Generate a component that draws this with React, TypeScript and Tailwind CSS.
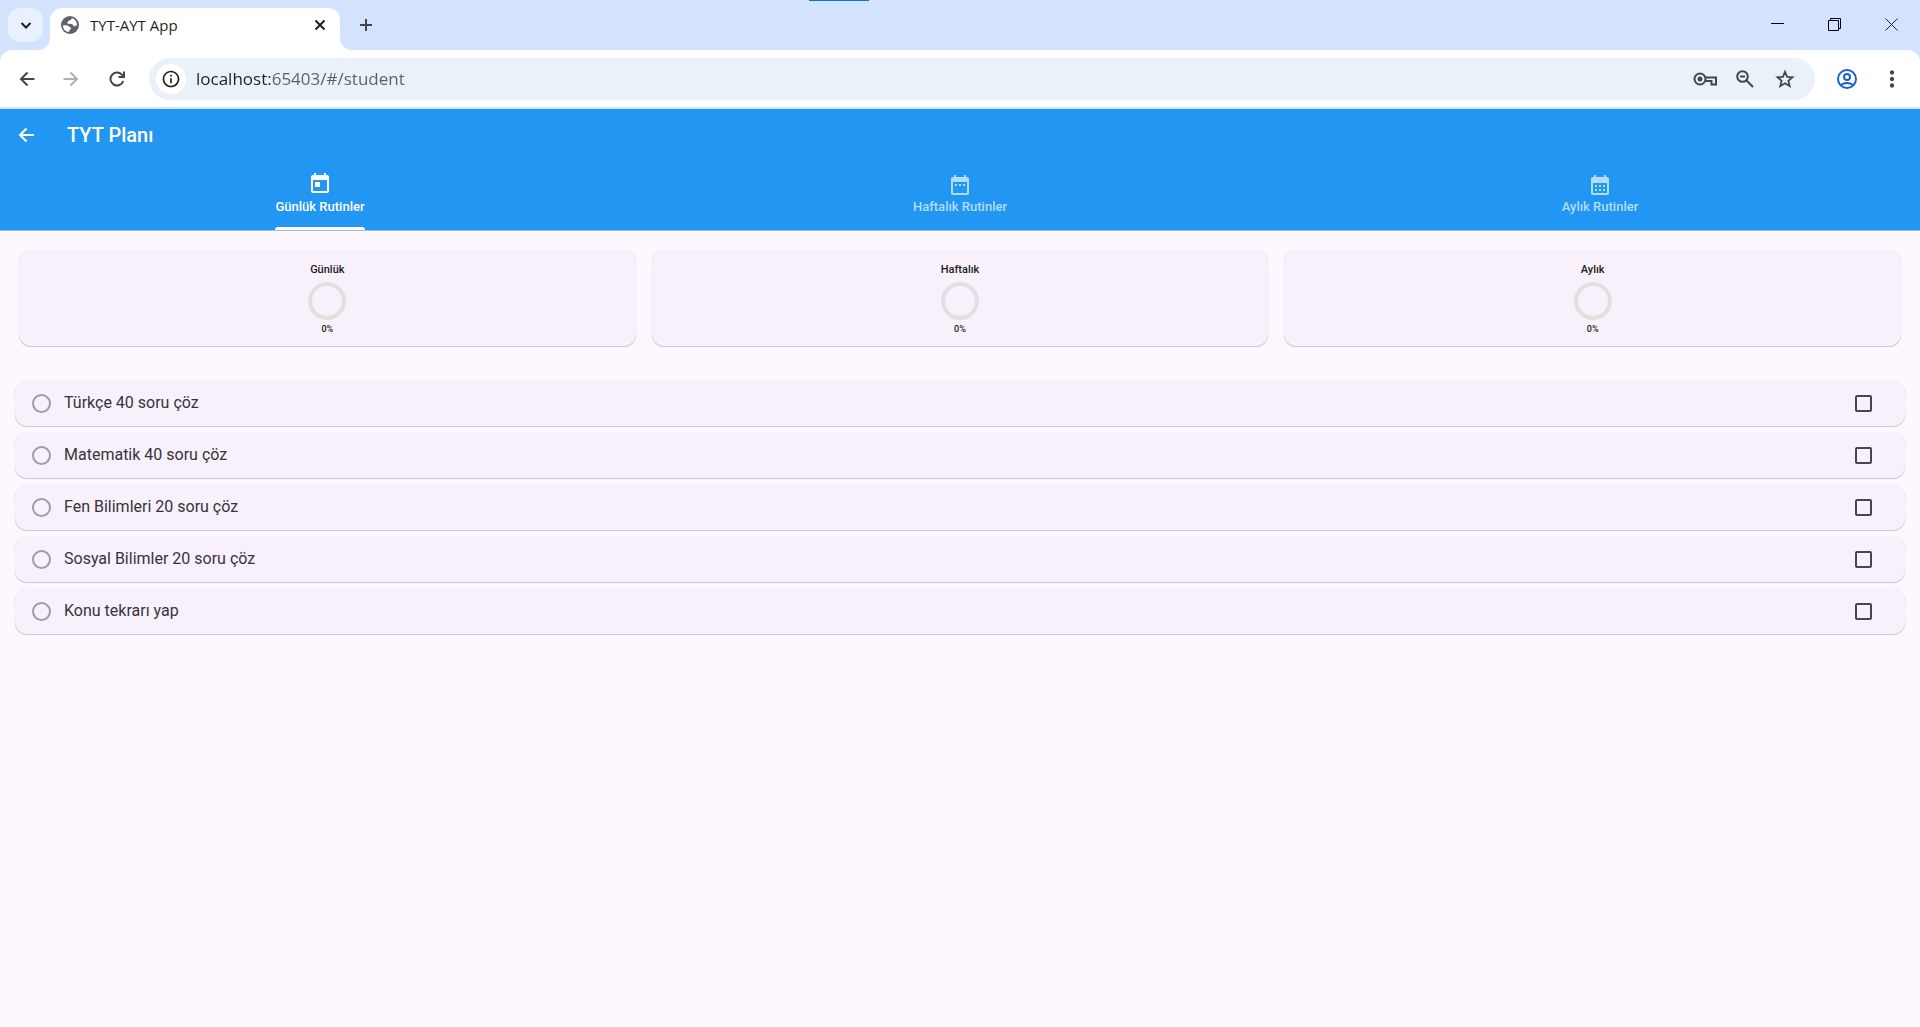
import type { ReactNode } from "react";
import { MdCalendarMonth, MdDateRange, MdInfoOutline, MdMoreVert, MdToday } from "react-icons/md";

const tabs = [
  { label: "Günlük Rutinler", icon: MdToday },
  { label: "Haftalık Rutinler", icon: MdDateRange },
  { label: "Aylık Rutinler", icon: MdCalendarMonth },
];

const summaries = [
  { label: "Günlük", percent: 0 },
  { label: "Haftalık", percent: 0 },
  { label: "Aylık", percent: 0 },
];

const routines = [
  "Türkçe 40 soru çöz",
  "Matematik 40 soru çöz",
  "Fen Bilimleri 20 soru çöz",
  "Sosyal Bilimler 20 soru çöz",
  "Konu tekrarı yap",
];

function Stroke({ d, size, width, className = "" }: { d: string; size: number; width: number; className?: string }) {
  return (
    <svg width={size} height={size} viewBox={`0 0 ${size} ${size}`} fill="none" stroke="currentColor" strokeWidth={width} className={className} aria-hidden="true">
      <path d={d} />
    </svg>
  );
}

function IconButton({ label, className, children }: { label: string; className: string; children: ReactNode }) {
  return (
    <button type="button" aria-label={label} className={`flex shrink-0 items-center justify-center ${className}`}>
      {children}
    </button>
  );
}

function Globe() {
  return (
    <svg width="20" height="20" viewBox="0 0 20 20" className="mb-2" aria-hidden="true">
      <circle cx="10" cy="10" r="9" fill="#5f6368" />
      <path
        d="M11.600 3c.2 1.300-.6 2.100-1.900 2.300-1.200.2-1 1.300-2 1.700-.9.400-.6 1.700.6 1.800l3.200.2c1.100.1 1.600.8 1.800 1.700.2.900 1.300.7 1.900.2.500-.4 1.200-.4 1.800-.3A7.200 7.200 0 0 0 11.600 3Z"
        fill="#fff"
      />
      <path
        d="M2.900 10.400c1.700-.2 3.800-.1 5.100.4 1.200.5 1.500 1.500 2.500 1.800.9.300.7 1.500-.2 1.800-.9.300-1.200.9-1.100 2.700A7.200 7.200 0 0 1 2.900 10.400Z"
        fill="#fff"
      />
    </svg>
  );
}

function TabStrip() {
  return (
    <div className="relative flex h-[50px] bg-[#d3e3fd]">
      <div className="absolute left-[809px] top-0 flex h-px" aria-hidden="true">
        <span className="w-[60px] bg-[#1273ba]" />
        <span className="w-[240px] bg-[#dfe1ee]" />
      </div>
      <IconButton label="Search tabs" className="ml-2 mt-2 h-[34px] w-[35px] rounded-xl bg-[#e9f1fe] text-[#1f1f1f]">
        <Stroke size={12} width={2} d="M1.500 4 6 8.500 10.500 4" />
      </IconButton>
      <div className="relative ml-[7px] mt-2 flex w-[290px] items-center rounded-t-xl bg-white pl-[10px] pr-3">
        <svg className="absolute -left-3 bottom-0" width="12" height="12" aria-hidden="true">
          <path d="M12 0v12H0A12 12 0 0 0 12 0Z" fill="#fff" />
        </svg>
        <svg className="absolute -right-3 bottom-0" width="12" height="12" aria-hidden="true">
          <path d="M0 0v12h12A12 12 0 0 1 0 0Z" fill="#fff" />
        </svg>
        <Globe />
        <span className="mb-2 ml-[10px] flex-1 font-['Open_Sans',sans-serif] text-[15px] text-[#1f1f1f]">TYT-AYT App</span>
        <IconButton label="Close tab" className="mb-2 size-4 text-[#1f1f1f]">
          <Stroke size={12} width={2} d="M1.500 1.500 10.500 10.500M10.500 1.500 1.500 10.500" />
        </IconButton>
      </div>
      <IconButton label="New tab" className="ml-3 h-[50px] w-7 text-[#444746]">
        <Stroke size={14} width={2} d="M7 1v12M1 7h12" />
      </IconButton>
      <div className="ml-auto flex h-12 text-black">
        <IconButton label="Minimize" className="w-[57px]">
          <Stroke size={13} width={1} d="M0 5.500h13" />
        </IconButton>
        <IconButton label="Restore" className="w-[57px]">
          <Stroke size={13} width={1} d="M.5 2.500h10v10H.5ZM2.500 2.500V.5h10v10h-2" />
        </IconButton>
        <IconButton label="Close window" className="w-[57px] text-[#222]">
          <Stroke size={13} width={1} d="M.5.5l12 12M12.500.5l-12 12" />
        </IconButton>
      </div>
    </div>
  );
}

function Toolbar() {
  return (
    <div className="bg-[#d3e3fd]">
      <div className="flex h-[59px] items-center rounded-t-xl border-b-2 border-[#d3e7f5] bg-white px-[5px] text-[#444746]">
        <IconButton label="Back" className="h-9 w-11">
          <Stroke size={16} width={2} d="M8.500 1.500 2 8l6.500 6.500M2 8h13.500" />
        </IconButton>
        <IconButton label="Forward" className="h-9 w-11 text-[#b0b1b1]">
          <Stroke size={16} width={2} d="M7.500 1.500 14 8l-6.500 6.500M14 8H.5" />
        </IconButton>
        <IconButton label="Reload" className="h-9 w-12">
          <svg width="16" height="16" viewBox="0 0 16 16" fill="none" stroke="currentColor" strokeWidth="2" aria-hidden="true">
            <path d="M14.200 10A6.500 6.500 0 1 1 12.800 3.600L14.800 5.600" />
            <path d="M15 .5v5.500H9.500" />
          </svg>
        </IconButton>
        <div className="ml-2 flex h-[42px] flex-1 items-center rounded-full bg-[#ebf1f9] pl-[7px] pr-[10px]">
          <IconButton label="Site information" className="size-[30px] rounded-full bg-white text-[#1f1f1f]">
            <MdInfoOutline className="size-5" />
          </IconButton>
          <input
            type="text"
            aria-label="Address"
            defaultValue="localhost:65403/#/student"
            className="ml-[10px] min-w-0 flex-1 bg-[linear-gradient(90deg,#1f1f1f_74px,#5b5e62_74px)] bg-clip-text font-['Open_Sans',sans-serif] text-[17px] text-transparent outline-none"
          />
          <IconButton label="Saved passwords" className="w-10">
            <svg width="24" height="14" viewBox="0 0 24 14" fill="none" stroke="currentColor" strokeWidth="2" aria-hidden="true">
              <circle cx="7" cy="7" r="5.500" />
              <circle cx="7" cy="7" r="2.500" fill="currentColor" stroke="none" />
              <path d="M12 5.500h11v7h-4.500V9H12" />
            </svg>
          </IconButton>
          <IconButton label="Zoom" className="w-10">
            <svg width="18" height="18" viewBox="0 0 18 18" fill="none" stroke="currentColor" strokeWidth="2" aria-hidden="true">
              <circle cx="6.500" cy="6.500" r="5.300" />
              <path d="M10.500 10.500 17 17M4 6.500h5" />
            </svg>
          </IconButton>
          <IconButton label="Bookmark this page" className="w-10">
            <svg width="20" height="20" viewBox="0 0 20 20" fill="none" stroke="currentColor" strokeWidth="1.800" aria-hidden="true">
              <path d="M10 2.800 12.100 7.800 17.500 8.300 13.400 11.900 14.700 17.200 10 14.300 5.300 17.200 6.600 11.900 2.500 8.300 7.900 7.800Z" />
            </svg>
          </IconButton>
        </div>
        <IconButton label="Profile" className="ml-[10px] w-11 text-[#1a5fd0]">
          <svg width="22" height="22" viewBox="0 0 22 22" fill="none" stroke="currentColor" strokeWidth="2" aria-hidden="true">
            <circle cx="11" cy="11" r="9" />
            <circle cx="11" cy="9" r="3" />
            <path d="M4.500 17.300q6.500-4.400 13 0" />
          </svg>
        </IconButton>
        <IconButton label="Menu" className="w-[46px]">
          <MdMoreVert className="size-[26px]" />
        </IconButton>
      </div>
    </div>
  );
}

function AppBar() {
  return (
    <header className="border-b border-[#9dbde0] bg-[#2196f3] text-white">
      <div className="flex h-[51px] items-center pl-[18px]">
        <IconButton label="Geri" className="size-4">
          <Stroke size={16} width={2} d="M8.500 1.500 2 8l6.500 6.500M2 8h14" />
        </IconButton>
        <h1 className="ml-[33px] text-[20px] font-medium leading-7">TYT Planı</h1>
      </div>
      <div role="tablist" className="grid grid-cols-3">
        {tabs.map(({ label, icon: Icon }, i) => (
          <button
            key={label}
            type="button"
            role="tab"
            aria-selected={i === 0}
            className={`flex h-[70px] flex-col items-center text-[13px] font-medium leading-4 ${i === 0 ? "pt-3" : "pt-[13px] text-[#b5ddfb]"}`}
          >
            <Icon className="size-6 shrink-0" aria-hidden="true" />
            <span className={`flex flex-1 flex-col justify-between ${i === 0 ? "pt-[3px]" : "pt-[2px]"}`}>
              {label}
              {i === 0 && <span className="h-[3px] rounded-t-[3px] bg-white" />}
            </span>
          </button>
        ))}
      </div>
    </header>
  );
}

function ProgressRing({ percent }: { percent: number }) {
  const length = 2 * Math.PI * 17;
  return (
    <svg width="38" height="38" viewBox="0 0 38 38" fill="none" strokeWidth="4" aria-hidden="true">
      <circle cx="19" cy="19" r="17" stroke="#e0e0e0" />
      {percent > 0 && (
        <circle cx="19" cy="19" r="17" stroke="#2196f3" strokeDasharray={`${(length * percent) / 100} ${length}`} transform="rotate(-90 19 19)" />
      )}
    </svg>
  );
}

const cardStyle = "rounded-xl bg-[#f8f1fb] shadow-[0_1px_1px_rgba(0,0,0,0.2),0_0_1px_rgba(0,0,0,0.12)]";

export default function App() {
  return (
    <div className="min-h-screen bg-[#fef7ff] font-[Roboto,sans-serif] text-[#1d1b20]">
      <TabStrip />
      <Toolbar />
      <AppBar />
      <main>
        <section className="mx-[19px] mt-[19px] grid grid-cols-3 gap-4">
          {summaries.map(({ label, percent }) => (
            <div key={label} className={`flex h-24 flex-col items-center pt-3 font-medium ${cardStyle}`}>
              <h2 className="mb-1 text-[11px] leading-4">{label}</h2>
              <ProgressRing percent={percent} />
              <p className="mt-px text-[9px] leading-4">{percent}%</p>
            </div>
          ))}
        </section>
        <ul className="mx-[15px] mt-[35px] flex flex-col gap-[7px]">
          {routines.map((routine, i) => (
            <li key={routine} className={`flex h-[45px] items-center pl-[17px] pr-[33px] ${cardStyle}`}>
              <span className="size-[19px] rounded-full border-2 border-[#a09ea2]" aria-hidden="true" />
              <label htmlFor={`routine-${i}`} className="ml-[13px] flex-1 pb-[2px] text-[16px] leading-5 text-[#36343a]">
                {routine}
              </label>
              <input
                id={`routine-${i}`}
                type="checkbox"
                className="size-[17px] appearance-none rounded-[2px] border-2 border-[#49454f] checked:bg-[#2196f3]"
              />
            </li>
          ))}
        </ul>
      </main>
    </div>
  );
}
